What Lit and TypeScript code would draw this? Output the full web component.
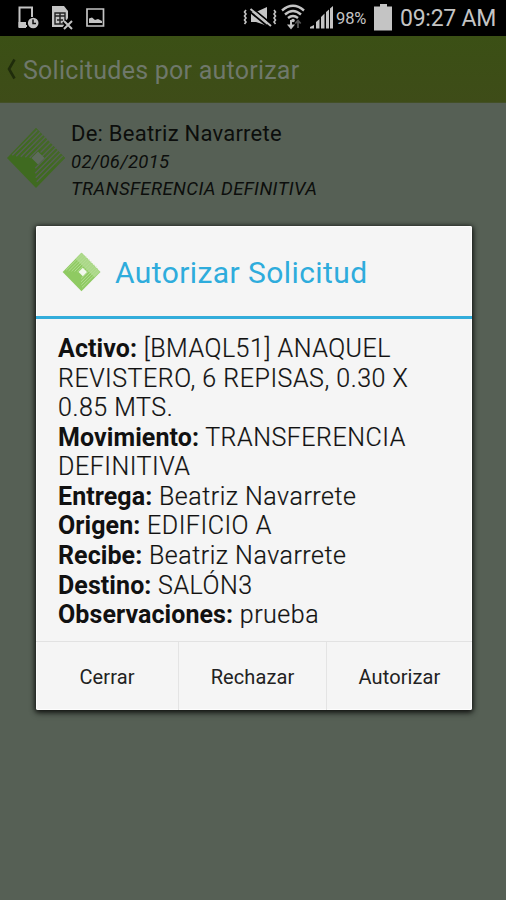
import { LitElement, html, svg, css } from "lit";
import { customElement } from "lit/decorators.js";

// Diagonal stripes: c is the x+y offset of the stripe, d the y-x value where it starts,
// e the y-x value where it ends.
const STRIPES = [
  [34.5, 22, -28], [39.5, 19, -29], [44.5, 15, -30], [49.5, 11, -30], [54.5, 7, -30],
  [60, -9, -30], [65.5, 3, -30], [70.5, 12, -30], [75.5, 17, -30], [80.5, 21, -29], [85.5, 24, -28],
];

@customElement("brand-mark")
class BrandMark extends LitElement {
  static styles = css`
    :host { display: block; }
    svg { display: block; width: 100%; height: 100%; }
    .base { fill: var(--mark-base); }
    .stripe { stroke: var(--mark-stripe); stroke-width: 1.5; fill: none; }
    .soft { fill: var(--mark-soft); }
    .eye { fill: var(--mark-eye); }
  `;
  render() {
    return html`<svg viewBox="0 0 60 62" preserveAspectRatio="none">
      <path class="base" d="M30 1 59 31 30 61 1 31Z" />
      <path class="soft" d="M30 1 59 31 50 39 21 11Z" />
      ${STRIPES.map(([c, d, e]) => svg`<path class="stripe" d="M${(c - d) / 2} ${(c + d) / 2} L${(c - e) / 2} ${(c + e) / 2}" />`)}
      <path class="eye" d="M32 24.500 38.500 31 32 37.500 25.500 31Z" />
    </svg>`;
  }
}

@customElement("status-bar")
class StatusBar extends LitElement {
  static styles = css`
    :host { display: flex; height: 36px; background: #000; color: #c4c4c4; align-items: center; justify-content: space-between; }
    svg { display: block; fill: none; stroke: #c4c4c4; }
    .solid { fill: #c4c4c4; stroke: none; }
    .right { display: flex; align-items: center; }
    .pct { font-size: 16.5px; width: 34px; letter-spacing: -0.1px; white-space: nowrap; }
    .time { font-size: 23px; width: 106px; white-space: nowrap; letter-spacing: -0.25px; }
  `;
  render() {
    return html`
      <svg width="120" height="36">
        <path stroke-width="2" d="M27 26H19.500V7.500H32V17" />
        <path class="solid" d="M18.500 22H26V28H18.500Z" />
        <circle class="solid" cx="33.200" cy="23" r="5.300" />
        <path stroke="#111" stroke-width="1.500" d="M33 19.500V23.500H36" />
        <path class="solid" d="M52 6H64L68 11V18L63 27H52Z" />
        <path stroke="#222" stroke-width="1.400" d="M55 13H65V24H55ZM55 16H65M60 13V24M57 20H63" />
        <path stroke="#000" stroke-width="5" d="M64 21 72 29M72 21 64 29" />
        <path stroke-width="2" d="M64 21 72 29M72 21 64 29" />
        <path stroke-width="1.700" d="M87 9H103.500V26H87Z" />
        <path class="solid" d="M89 23V18.500L92 17.500 95 20 98 19 102 21V23Z" />
      </svg>
      <div class="right">
        <svg width="96" height="36">
          <path stroke-width="1.600" d="M6 10 4.500 12 6 14 4.500 16 6 18 4.500 20 6 22 4.500 24" />
          <path class="solid" d="M11 12H16L27 7V26L22 24 16 22H11Z" />
          <path stroke="#000" stroke-width="1.800" d="M11.500 7.500 31.500 24M9 11 29 27.500" />
          <path stroke-width="2" d="M10.500 9 31 26" />
          <path stroke-width="1.600" d="M34 10 35.500 12 34 14 35.500 16 34 18 35.500 20 34 22 35.500 24" />
          <path stroke-width="2.400" d="M42 10.500Q53 1 64 10.500M45 14.500Q53 7.500 61 14.500M48 18Q53 14 58 18" />
          <circle class="solid" cx="53" cy="20.500" r="1.800" />
          <path stroke-width="2" d="M51 20V26" />
          <path class="solid" d="M47 24.500H55L51 29.500Z" />
          <path stroke="#555" stroke-width="1.800" d="M58 28V21M55.300 23.500 58 20.500 60.700 23.500" />
          <path class="solid" d="M70 28.500V27L74 25V28.500ZM76 28.500V22L79.500 19V28.500ZM81 28.500V17L84.500 13.500V28.500ZM86 28.500V12L89 9.500V28.500ZM90 28.500V8.500L93 6V28.500Z" />
        </svg>
        <span class="pct">98%</span>
        <svg width="30" height="36">
          <path class="solid" d="M10 4H17V6.500H22V30.500H4V6.500H10Z" />
        </svg>
        <span class="time">09:27 AM</span>
      </div>`;
  }
}

@customElement("confirm-dialog")
class ConfirmDialog extends LitElement {
  static styles = css`
    :host { display: block; box-sizing: border-box; width: 436px; height: 484px; background: #f5f5f5; border-radius: 2px; box-shadow: 0 1px 5px 1px rgba(0,0,0,.75), 0 3px 7px rgba(0,0,0,.35), inset 0 0 0 1px #fdfdfd; color: #111; }
    .head { height: 90px; display: flex; align-items: center; border-bottom: 3px solid #33addb; padding-left: 26px; gap: 14px; }
    brand-mark { width: 39px; height: 40px; margin-top: 2px; --mark-base: #8fca62; --mark-soft: #abd888; --mark-stripe: #b4dd94; --mark-eye: #f2f8ec; }
    h1 { margin: 0; font-size: 30px; font-weight: 400; color: #2eacdc; letter-spacing: .42px; padding-top: 3px; white-space: nowrap; }
    .body { box-sizing: border-box; height: 322px; padding: 15px 22px 0; font-size: 25px; line-height: 29.56px; font-weight: 300; letter-spacing: .52px; -webkit-text-stroke: .2px #111; }
    .body p { margin: 0; white-space: nowrap; }
    b { font-weight: 700; letter-spacing: .08px; -webkit-text-stroke: 0; }
    .actions { display: grid; grid-template-columns: 142px 148px 1fr; height: 69px; box-sizing: border-box; border-top: 1px solid #e2e2e2; }
    .action { display: flex; align-items: center; justify-content: center; font-size: 20px; padding-top: 2px; letter-spacing: .1px; color: #222; }
    .action + .action { border-left: 1px solid #e4e4e4; }
  `;
  render() {
    return html`
      <div class="head"><brand-mark></brand-mark><h1>Autorizar Solicitud</h1></div>
      <div class="body">
        <p><b>Activo:</b> [BMAQL51] ANAQUEL<br />REVISTERO, 6 REPISAS, 0.30 X<br />0.85 MTS.</p>
        <p><b>Movimiento:</b> TRANSFERENCIA<br />DEFINITIVA</p>
        <p><b>Entrega:</b> Beatriz Navarrete</p>
        <p><b>Origen:</b> EDIFICIO A</p>
        <p><b>Recibe:</b> Beatriz Navarrete</p>
        <p><b>Destino:</b> SALÓN3</p>
        <p><b>Observaciones:</b> prueba</p>
      </div>
      <div class="actions">
        <div class="action">Cerrar</div><div class="action">Rechazar</div><div class="action">Autorizar</div>
      </div>`;
  }
}

@customElement("app-root")
class AppRoot extends LitElement {
  static styles = css`
    :host { display: block; position: relative; height: 900px; overflow: hidden; background: #566055; font-family: Roboto, "Liberation Sans", sans-serif; }
    .bar { height: 67px; background: linear-gradient(#3b5015, #3e4c18); display: flex; align-items: center; padding-left: 7px; box-sizing: border-box; color: #6f786b; border-bottom: 1px solid #435026; }
    .back { width: 9px; height: 22px; margin-right: 7px; fill: none; stroke: #1f2c0b; stroke-width: 2.6; }
    .title { font-size: 25px; letter-spacing: .24px; padding-top: 3px; white-space: nowrap; }
    .row { display: flex; padding: 17px 6px 0; gap: 6px; color: #0c0e0c; }
    .row brand-mark { width: 60px; height: 62px; margin: 7px -1px 0 0; --mark-base: #3f6a20; --mark-soft: #436926; --mark-stripe: #566055; --mark-eye: #5e6b5c; }
    .from { font-size: 22px; line-height: 27px; letter-spacing: .24px; }
    .date, .kind { font-size: 18.5px; font-style: italic; line-height: 27px; letter-spacing: .42px; white-space: nowrap; }
    .date { padding-top: 2px; letter-spacing: .3px; }
    confirm-dialog { position: absolute; left: 36px; top: 226px; }
  `;
  render() {
    return html`
      <status-bar></status-bar>
      <div class="bar">
        <svg class="back" viewBox="0 0 9 22"><path d="M7.500 1.500 2 11 7.500 20.500" /></svg>
        <span class="title">Solicitudes por autorizar</span>
      </div>
      <div class="row">
        <brand-mark></brand-mark>
        <div>
          <div class="from">De: Beatriz Navarrete</div>
          <div class="date">02/06/2015</div>
          <div class="kind">TRANSFERENCIA DEFINITIVA</div>
        </div>
      </div>
      <confirm-dialog></confirm-dialog>`;
  }
}
